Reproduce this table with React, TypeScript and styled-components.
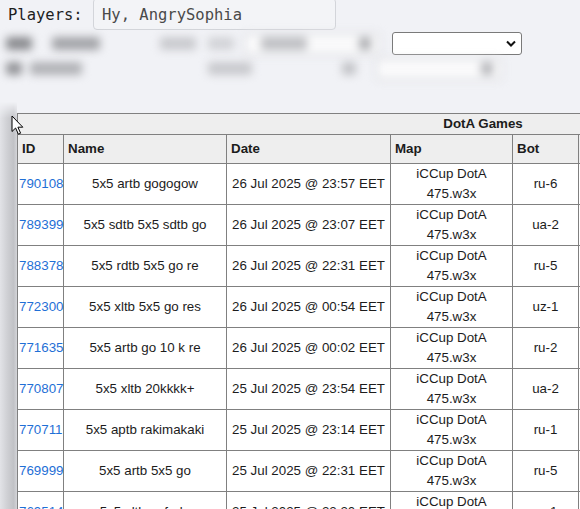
import React from "react";
import styled, { createGlobalStyle } from "styled-components";

const Global = createGlobalStyle`
  html, body {
    margin: 0;
    padding: 0;
    background: #f1f2f6;
    width: 580px;
    height: 509px;
    overflow: hidden;
  }
  * { box-sizing: border-box; }
`;

const Page = styled.div`
  position: relative;
  width: 580px;
  height: 509px;
  overflow: hidden;
  font-family: "Liberation Sans", Arial, sans-serif;
`;

const PlayersRow = styled.div`
  display: flex;
  align-items: center;
  height: 30px;
  padding-left: 8px;
  font-family: "DejaVu Sans Mono", "Liberation Mono", monospace;
  font-size: 15.5px;
`;

const PlayersLabel = styled.span`
  color: #1e1e1e;
  width: 85px;
`;

const PlayersInput = styled.div`
  margin-top: -2px;
  width: 243px;
  height: 32px;
  border: 1px solid #d3d5da;
  border-radius: 4px;
  background: #f3f4f7;
  color: #4a4a4a;
  padding-left: 8px;
  display: flex;
  align-items: center;
  padding-top: 2px;
`;

const FilterRow = styled.div<{ $top: number }>`
  display: flex;
  align-items: center;
  height: 23px;
  margin-top: ${(p) => p.$top}px;
  position: relative;
`;

const Blurred = styled.div<{ $w: number }>`
  display: flex;
  align-items: center;
  width: ${(p) => p.$w}px;
  height: 23px;
  filter: blur(4.5px);
`;

const BlurText = styled.span<{ $w: number; $shade: string; $ml: number }>`
  display: inline-block;
  flex: none;
  width: ${(p) => p.$w}px;
  height: 13px;
  margin-left: ${(p) => p.$ml}px;
  background: ${(p) => p.$shade};
  border-radius: 3px;
`;

const BlurSelect = styled.div<{ $w: number; $ml: number }>`
  display: flex;
  flex: none;
  align-items: center;
  justify-content: space-between;
  margin-left: ${(p) => p.$ml}px;
  width: ${(p) => p.$w}px;
  height: 22px;
  border: 1px solid #b9bac0;
  border-radius: 3px;
  background: #fafafb;
  padding: 0 8px;
`;

const SelectWrap = styled.div`
  position: relative;
  margin-left: 10px;
  width: 130px;
  height: 23px;
`;

const Select = styled.select`
  appearance: none;
  width: 100%;
  height: 100%;
  border: 1px solid #7a7a7a;
  border-radius: 3px;
  background: #fff;
  font-family: "Liberation Sans", Arial, sans-serif;
  font-size: 13px;
`;

const Chevron = styled.svg`
  position: absolute;
  right: 6px;
  top: 8px;
  pointer-events: none;
`;

const TableSection = styled.div`
  display: flex;
  margin-top: 22px;
  padding-top: 11px;
  position: relative;
`;

const Gutter = styled.div`
  width: 17px;
  flex: none;
  margin-top: -11px;
  background: linear-gradient(to right, #e2e3e7 0%, #d0d1d5 40%, #c1c2c6 80%, #d4d5d9 100%);
  -webkit-mask-image: linear-gradient(to bottom, transparent 0px, #000 16px);
  mask-image: linear-gradient(to bottom, transparent 0px, #000 16px);
`;

const Table = styled.table`
  border-collapse: collapse;
  table-layout: fixed;
  width: 931px;
  flex: none;
  font-size: 13.33px;
  line-height: 20px;
  color: #1c1c1c;
  background: #fff;
`;

const Th = styled.th<{ $center?: boolean }>`
  border: 1px solid #808080;
  background: #eeeeee;
  font-weight: bold;
  text-align: ${(p) => (p.$center ? "center" : "left")};
  padding: ${(p) => (p.$center ? "0 4px" : "4px")};
  color: #1c1c1c;
`;

const Td = styled.td<{ $align?: string }>`
  border: 1px solid #808080;
  padding: 0 1px;
  height: 41px;
  text-align: ${(p) => p.$align || "center"};
  white-space: nowrap;
`;

const MapTd = styled(Td)`
  white-space: normal;
`;

const IdLink = styled.a`
  color: #1f6fd6;
  text-decoration: none;
`;

const Cursor = styled.svg`
  position: absolute;
  left: 11px;
  top: 115px;
`;

const rows = [
  ["790108", "5x5 artb gogogow", "26 Jul 2025 @ 23:57 EET", "ru-6"],
  ["789399", "5x5 sdtb 5x5 sdtb go", "26 Jul 2025 @ 23:07 EET", "ua-2"],
  ["788378", "5x5 rdtb 5x5 go re", "26 Jul 2025 @ 22:31 EET", "ru-5"],
  ["772300", "5x5 xltb 5x5 go res", "26 Jul 2025 @ 00:54 EET", "uz-1"],
  ["771635", "5x5 artb go 10 k re", "26 Jul 2025 @ 00:02 EET", "ru-2"],
  ["770807", "5x5 xltb 20kkkk+", "25 Jul 2025 @ 23:54 EET", "ua-2"],
  ["770711", "5x5 aptb rakimakaki", "25 Jul 2025 @ 23:14 EET", "ru-1"],
  ["769999", "5x5 artb 5x5 go", "25 Jul 2025 @ 22:31 EET", "ru-5"],
  ["769514", "5x5 xltb gofada", "25 Jul 2025 @ 22:20 EET", "ru-1"],
];

export default function App() {
  return (
    <Page>
      <Global />
      <PlayersRow>
        <PlayersLabel>Players:</PlayersLabel>
        <PlayersInput>Hy, AngrySophia</PlayersInput>
      </PlayersRow>
      <FilterRow $top={2}>
        <Blurred $w={382}>
          <BlurText $w={26} $shade="#8a8b8f" $ml={6} />
          <BlurText $w={48} $shade="#a3a4a8" $ml={20} />
          <BlurText $w={36} $shade="#c9cace" $ml={60} />
          <BlurText $w={26} $shade="#d2d3d7" $ml={12} />
          <BlurSelect $w={136} $ml={10}>
            <BlurText $w={46} $shade="#bfc0c4" $ml={8} />
            <BlurText $w={12} $shade="#aeafb3" $ml={0} />
          </BlurSelect>
        </Blurred>
        <SelectWrap>
          <Select aria-label="filter" defaultValue="">
            <option value=""></option>
          </Select>
          <Chevron width="10" height="7" viewBox="0 0 10 7">
            <path d="M1 1.5 L5 5.5 L9 1.5" fill="none" stroke="#111" strokeWidth="2" />
          </Chevron>
        </SelectWrap>
      </FilterRow>
      <FilterRow $top={2}>
        <Blurred $w={502}>
          <BlurText $w={16} $shade="#939498" $ml={6} />
          <BlurText $w={52} $shade="#b1b2b6" $ml={8} />
          <BlurText $w={44} $shade="#c8c9cd" $ml={126} />
          <BlurText $w={14} $shade="#c2c3c7" $ml={90} />
          <BlurSelect $w={126} $ml={20}>
            <span />
            <BlurText $w={12} $shade="#b6b7bb" $ml={0} />
          </BlurSelect>
        </Blurred>
      </FilterRow>
      <TableSection>
        <Gutter />
        <Table>
          <colgroup>
            <col style={{ width: 46 }} />
            <col style={{ width: 163 }} />
            <col style={{ width: 164 }} />
            <col style={{ width: 122 }} />
            <col style={{ width: 66 }} />
            <col style={{ width: 120 }} />
            <col style={{ width: 250 }} />
          </colgroup>
          <thead>
            <tr>
              <Th $center colSpan={7}>DotA Games</Th>
            </tr>
            <tr>
              <Th>ID</Th>
              <Th>Name</Th>
              <Th>Date</Th>
              <Th>Map</Th>
              <Th>Bot</Th>
              <Th />
              <Th />
            </tr>
          </thead>
          <tbody>
            {rows.map((r) => (
              <tr key={r[0]}>
                <Td $align="left">
                  <IdLink href="#">{r[0]}</IdLink>
                </Td>
                <Td>{r[1]}</Td>
                <Td>{r[2]}</Td>
                <MapTd>iCCup DotA 475.w3x</MapTd>
                <Td>{r[3]}</Td>
                <Td />
                <Td />
              </tr>
            ))}
          </tbody>
        </Table>
      </TableSection>
      <Cursor width="13" height="21" viewBox="0 0 13 21">
        <path
          d="M1 1 L1 16.5 L4.6 13 L7.4 19.2 L9.6 18.2 L6.9 12.2 L11.8 12.2 Z"
          fill="#fff"
          stroke="#000"
          strokeWidth="1"
          strokeLinejoin="round"
        />
      </Cursor>
    </Page>
  );
}
